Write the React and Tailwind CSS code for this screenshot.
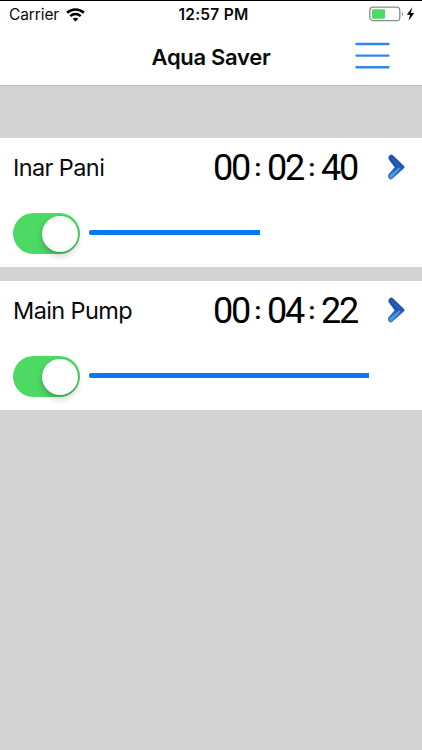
import { useState } from 'react';

const pumps = [
  { name: 'Inar Pani', time: ['00', '02', '40'], progress: 54 },
  { name: 'Main Pump', time: ['00', '04', '22'], progress: 88.3 }
];

function StatusBar() {
  return (
    <div className="grid h-[28px] grid-cols-3 items-center border-t border-black pl-[9px] pr-[6px] text-[15.5px] leading-[28px]">
      <div className="flex items-center gap-[7px]">
        <span className="tracking-[-0.1px]">Carrier</span>
        <svg width="19" height="14" viewBox="0 0 19 14" fill="none" stroke="black">
          <path d="M1.1 4.8C5.8.3 13.2.3 17.9 4.8" strokeWidth="2.6" />
          <path d="M4.3 8.2c2.9-2.8 7.5-2.8 10.4 0" strokeWidth="2.5" />
          <path d="M6.7 10.7c1.5-1.4 4.1-1.4 5.6 0L9.5 13.4z" fill="black" stroke="none" />
        </svg>
      </div>
      <div className="whitespace-nowrap pl-[2px] text-center font-semibold tracking-[0.25px]">
        12:57 PM
      </div>
      <div className="flex items-center justify-end">
        <svg width="47" height="16" viewBox="0 0 47 16" className="mb-[2px]">
          <rect x=".8" y="1.2" width="30" height="13.4" rx="3.2" fill="white" stroke="#8b8b8b" strokeWidth="1.3" />
          <rect x="3" y="3.3" width="13" height="9.4" rx="1" fill="#4cd964" />
          <path d="M32.8 5.8c1.6.6 1.6 3.8 0 4.4z" fill="#8b8b8b" />
          <path d="M43.4 1.2 37.8 8.8h3.3l-1.6 5.9 5.8-7.8h-3.5z" fill="black" />
        </svg>
      </div>
    </div>
  );
}

function Header() {
  return (
    <header className="h-[86px] border-b border-[#bdbdbd] bg-white">
      <StatusBar />
      <div className="grid h-[57px] grid-cols-[1fr_auto_1fr] items-center">
        <h1 className="col-start-2 text-[22px] font-semibold leading-[56px] tracking-[-0.3px]">
          Aqua Saver
        </h1>
        <button className="mr-[32px] justify-self-end" aria-label="Menu">
          <svg width="35" height="29" viewBox="0 0 35 29" className="mb-[2px]" stroke="#3486e6" strokeWidth="2.4" strokeLinecap="round">
            <path d="M1.5 3h32M1.5 14.6h32M1.5 26.3h32" />
          </svg>
        </button>
      </div>
    </header>
  );
}

function Timer({ time }) {
  return (
    <div className="flex items-center font-[Roboto,sans-serif] text-[36px] leading-[40px] text-black">
      {time.map((part, i) => (
        <span key={i} className="flex items-center">
          {i > 0 && (
            <span className="w-[18px] text-center text-[24px] font-bold leading-[36px]">:</span>
          )}
          <span className="w-[36px] text-center tracking-[-2.2px]">{part}</span>
        </span>
      ))}
    </div>
  );
}

function Chevron() {
  return (
    <svg width="18" height="27" viewBox="0 0 18 27" fill="none">
      <defs>
        <linearGradient id="chevron" x1="0" y1="0" x2="0" y2="1">
          <stop offset="0" stopColor="#1d4e9f" />
          <stop offset=".45" stopColor="#1656b2" />
          <stop offset="1" stopColor="#4d9be8" />
        </linearGradient>
      </defs>
      <path
        d="M2.2 1.3C.7 2 .6 4.3 1.3 5.6l5.8 7.7-6.2 7.1c-.6 1.5-.4 4.2 1.3 4.6 1 .2 1.7-.2 2.4-1L15.8 14c.5-.6.5-1.2 0-1.8L5 1.8C4.2 1 3.1.8 2.2 1.3z"
        fill="url(#chevron)"
        stroke="#174b99"
        strokeWidth=".8"
      />
      <path d="M3 3.4 12.5 12.7" stroke="#2c68b8" strokeWidth="1.2" />
      <path d="M3 22.3 11.5 14" stroke="#5aa2ea" strokeWidth="1.5" />
    </svg>
  );
}

function Toggle() {
  const [on, setOn] = useState(true);

  return (
    <button
      role="switch"
      aria-checked={on}
      aria-label="Pump power"
      onClick={() => setOn(!on)}
      className={`flex h-[41px] w-[67px] items-center rounded-full px-[2px] ${
        on ? 'justify-end bg-[#4cd964]' : 'justify-start bg-[#e5e5ea]'
      }`}
    >
      <span className="h-[36px] w-[36px] rounded-full bg-white shadow-[0_4px_7px_rgba(0,0,0,0.18),0_1px_2px_rgba(0,0,0,0.16)]" />
    </button>
  );
}

function PumpCard({ pump }) {
  return (
    <section className="h-[129px] bg-white pl-[13px]">
      <div className="flex h-[59px] items-center justify-between pr-[16px]">
        <h2 className="text-[23.5px] leading-[61px] tracking-[-0.6px]">{pump.name}</h2>
        <div className="flex items-center gap-[31px]">
          <Timer time={pump.time} />
          <Chevron />
        </div>
      </div>
      <div className="flex pt-[16px]">
        <Toggle />
        <div className="mr-4 ml-[9px] mt-[17px] h-[5px] flex-1">
          <div
            className="h-full rounded-l-[2px] bg-[#0b78ee]"
            style={{ width: `${pump.progress}%` }}
          />
        </div>
      </div>
    </section>
  );
}

export default function App() {
  return (
    <div className="min-h-screen bg-[#d3d3d3] font-[Inter,sans-serif] text-[#0a0a0a]">
      <Header />
      <main className="flex flex-col gap-[14px] pt-[52px]">
        {pumps.map((pump) => (
          <PumpCard key={pump.name} pump={pump} />
        ))}
      </main>
    </div>
  );
}
